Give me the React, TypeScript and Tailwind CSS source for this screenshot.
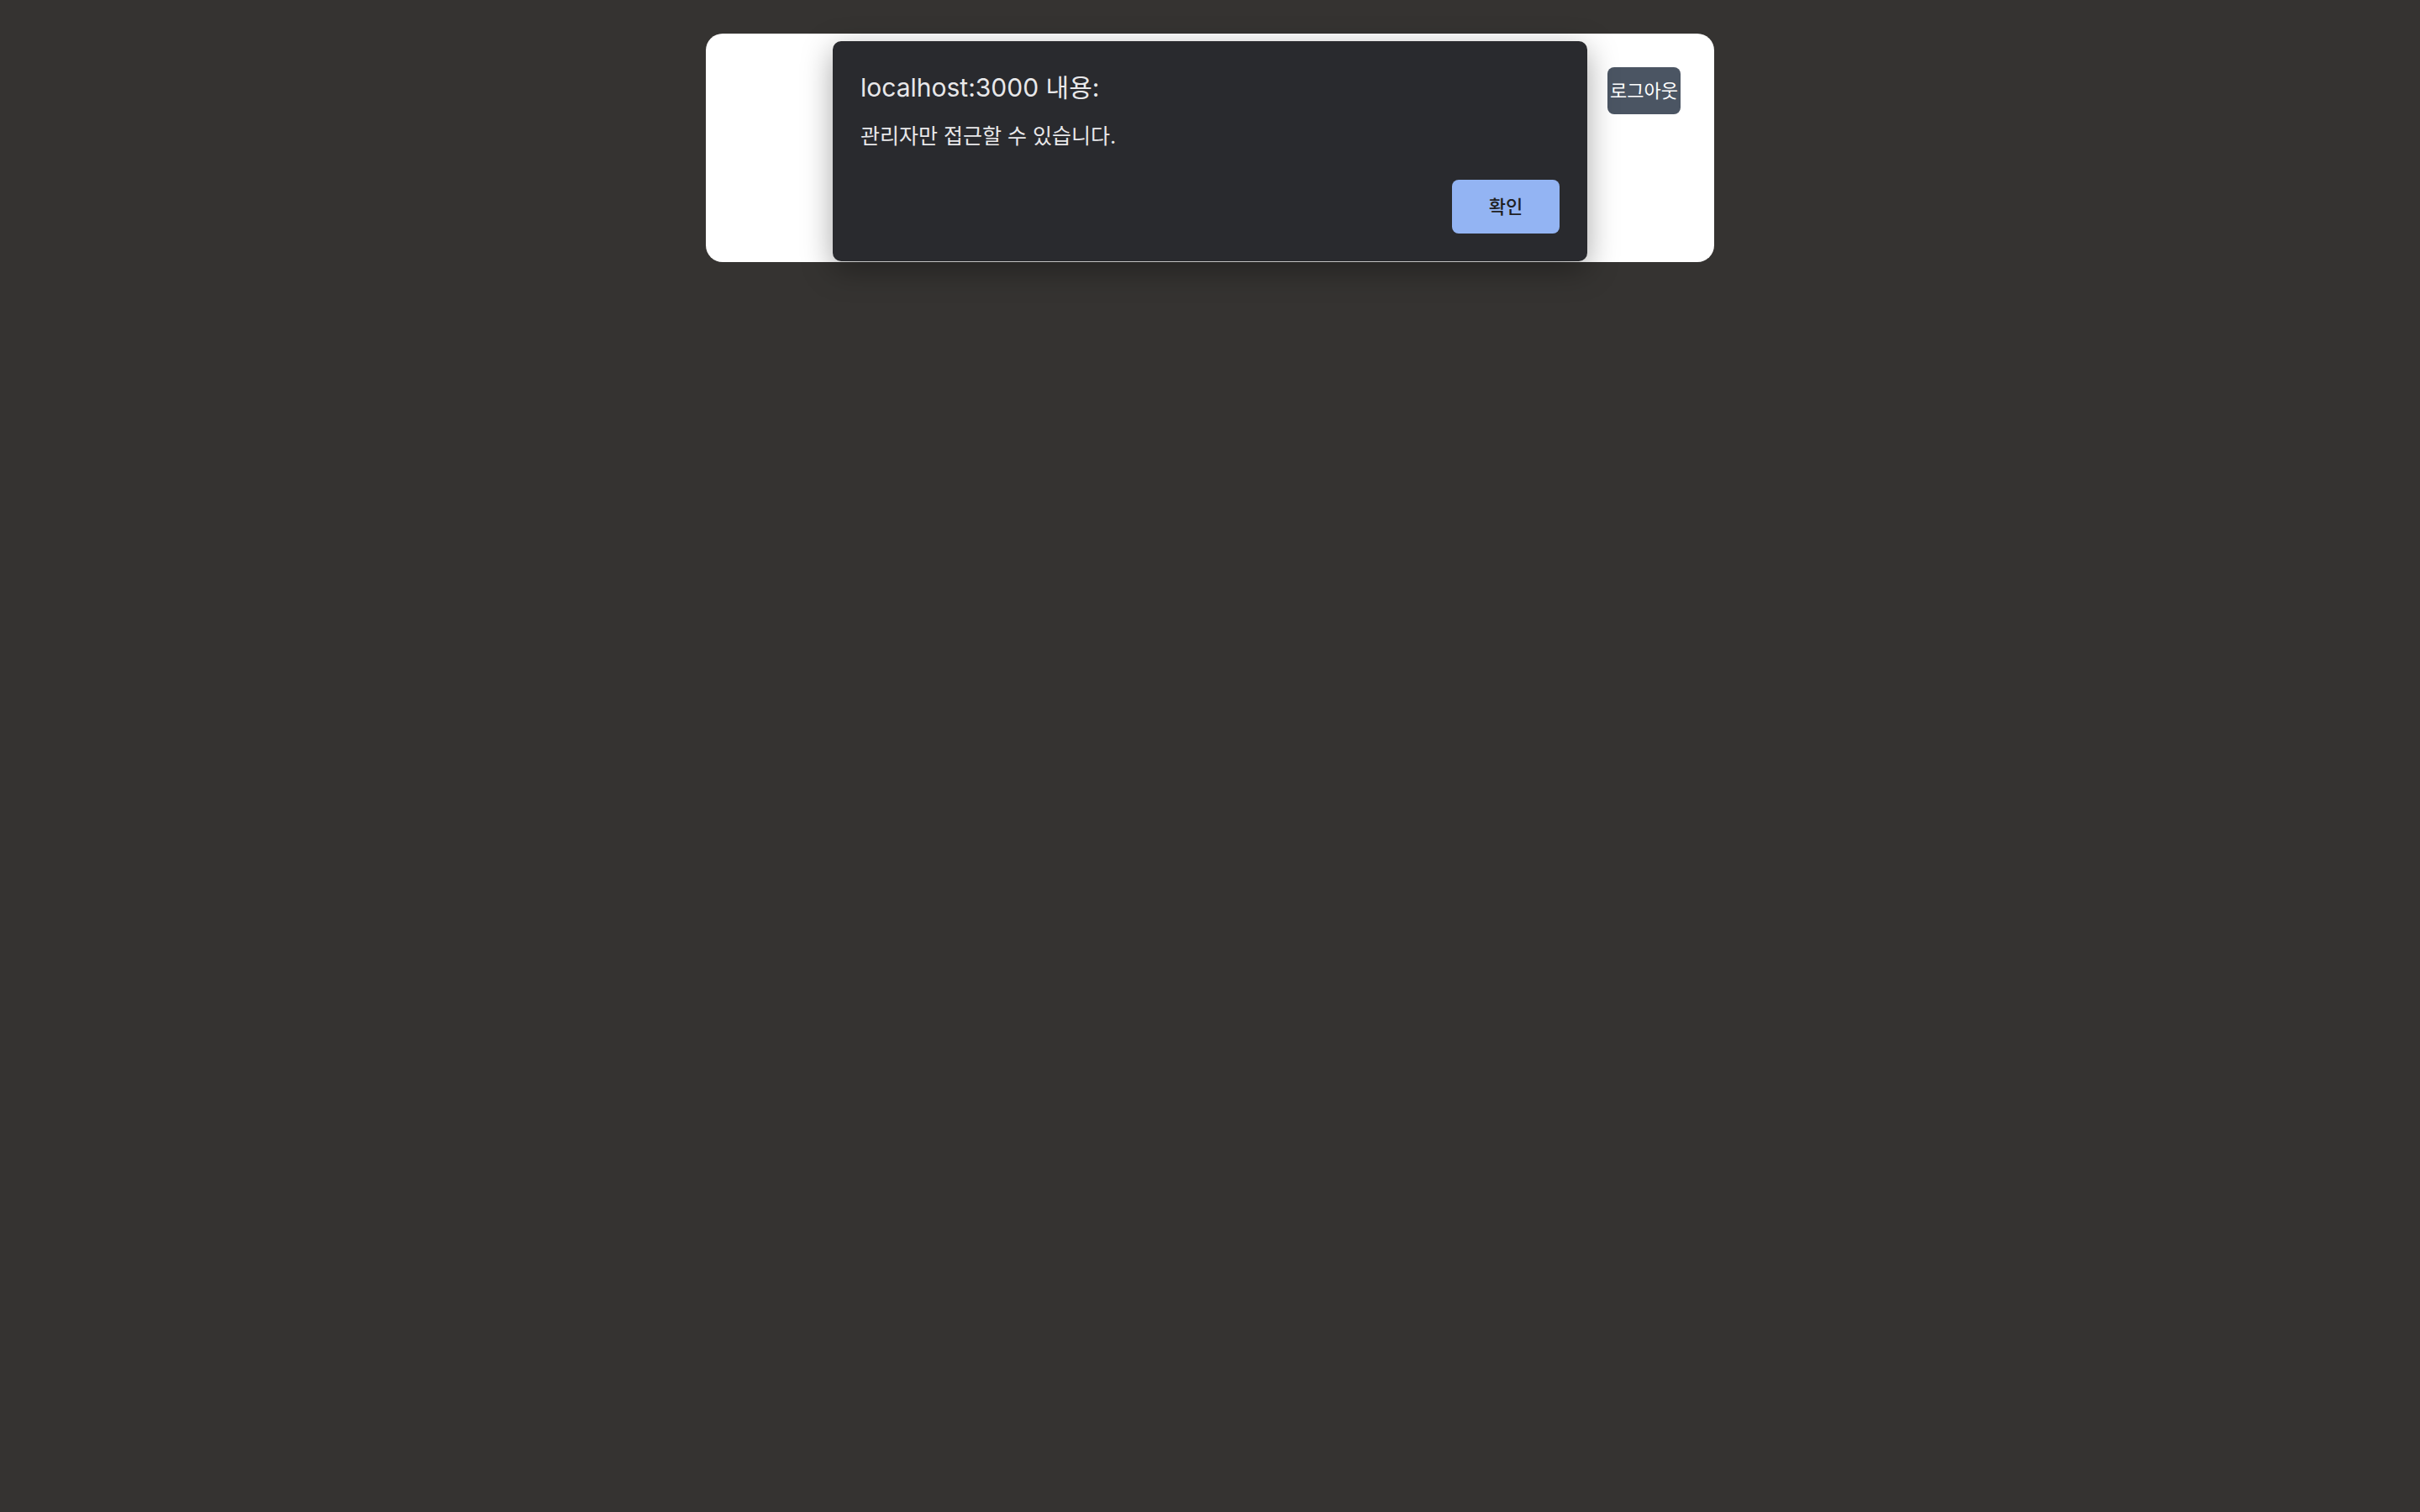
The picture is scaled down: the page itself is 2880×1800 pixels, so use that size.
export default function App() {
  return (
    <div
      className="relative min-h-screen w-full bg-[#353331] pt-10"
      style={{ fontFamily: '"Inter", "Noto Sans CJK KR", sans-serif' }}
    >
      {/* page card */}
      <div className="mx-auto h-[272px] w-[1200px] rounded-[20px] bg-white p-10">
        <div className="flex justify-end">
          <button className="flex h-[56px] w-[87px] items-center justify-center whitespace-nowrap rounded-lg bg-[#4b5563] text-[22px] leading-none text-white">
            로그아웃
          </button>
        </div>
      </div>

      {/* alert dialog */}
      <div className="absolute left-[991px] top-[49px] flex h-[262px] w-[898px] flex-col rounded-[10px] bg-[#292a2e] pl-[33px] pr-[33px] pb-[33px] pt-[35px] shadow-[0_10px_36px_rgba(0,0,0,0.35)]">
        <div className="text-[30px] leading-[40px] text-[#e8e8ea]">localhost:3000 내용:</div>
        <div className="mt-[23px] text-[25px] leading-[30px] text-[#e8e8ea]">관리자만 접근할 수 있습니다.</div>
        <div className="mt-auto flex justify-end">
          <button className="flex h-[64px] w-[128px] items-center justify-center rounded-lg bg-[#93b4f3] text-[22px] font-medium text-[#1f1f23]">
            확인
          </button>
        </div>
      </div>
    </div>
  );
}
